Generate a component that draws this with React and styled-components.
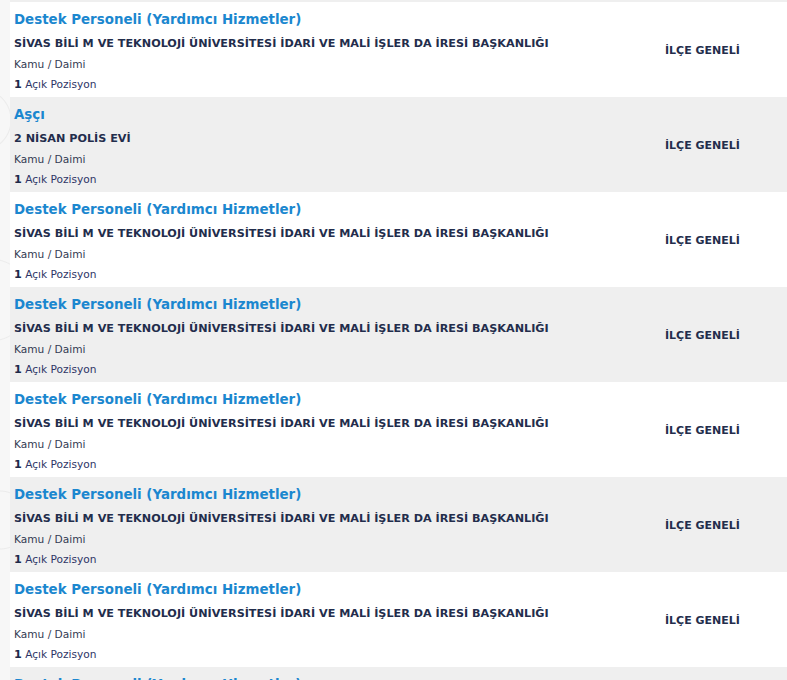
import React from "react";
import styled, { createGlobalStyle } from "styled-components";

const Global = createGlobalStyle`
  html, body { margin: 0; padding: 0; }
  body {
    background: #f6f6f6;
    font-family: "DejaVu Sans", Verdana, sans-serif;
    overflow: hidden;
  }
`;

const Page = styled.div`
  padding-left: 10px;
  min-height: 680px;
  background:
    radial-gradient(circle at -20px 120px, transparent 30px, #ebebeb 31px, transparent 32px),
    radial-gradient(circle at -10px 300px, transparent 40px, #ececec 41px, transparent 42px),
    radial-gradient(circle at 0px 520px, transparent 28px, #ebebeb 29px, transparent 30px),
    #f7f7f7;
  background-repeat: no-repeat;
`;

const List = styled.div`
  border-top: 2px solid #efefef;
  background: #fff;
`;

const Row = styled.div`
  display: grid;
  grid-template-columns: 1fr 122px;
  align-items: center;
  height: 95px;
  box-sizing: border-box;
  padding: 0 0 0 4px;
  background: ${(p) => (p.$alt ? "#efefef" : "#ffffff")};
`;

const Info = styled.div`
  display: flex;
  flex-direction: column;
  align-self: start;
  padding-top: 9px;
`;

const Title = styled.a`
  color: #1b87cf;
  font-weight: bold;
  font-size: 13.4px;
  line-height: 18px;
  text-decoration: none;
  margin-bottom: 7px;
`;

const Org = styled.div`
  color: #232d4c;
  font-weight: bold;
  font-size: 11.2px;
  line-height: 16px;
  margin-bottom: 4px;
`;

const Meta = styled.div`
  color: #333a52;
  font-size: 10.6px;
  line-height: 16px;
  margin-bottom: 4px;
`;

const Positions = styled.div`
  color: #2e3566;
  font-size: 10.6px;
  line-height: 16px;
  b { color: #1e2a4a; font-size: 11.2px; }
`;

const Area = styled.div`
  color: #232d4c;
  font-weight: bold;
  font-size: 11px;
  padding-top: 1px;
`;

const rows = [
  { title: "Destek Personeli (Yardımcı Hizmetler)", org: "SİVAS BİLİ M VE TEKNOLOJİ ÜNİVERSİTESİ İDARİ VE MALİ İŞLER DA İRESİ BAŞKANLIĞI" },
  { title: "Aşçı", org: "2 NİSAN POLİS EVİ" },
  { title: "Destek Personeli (Yardımcı Hizmetler)", org: "SİVAS BİLİ M VE TEKNOLOJİ ÜNİVERSİTESİ İDARİ VE MALİ İŞLER DA İRESİ BAŞKANLIĞI" },
  { title: "Destek Personeli (Yardımcı Hizmetler)", org: "SİVAS BİLİ M VE TEKNOLOJİ ÜNİVERSİTESİ İDARİ VE MALİ İŞLER DA İRESİ BAŞKANLIĞI" },
  { title: "Destek Personeli (Yardımcı Hizmetler)", org: "SİVAS BİLİ M VE TEKNOLOJİ ÜNİVERSİTESİ İDARİ VE MALİ İŞLER DA İRESİ BAŞKANLIĞI" },
  { title: "Destek Personeli (Yardımcı Hizmetler)", org: "SİVAS BİLİ M VE TEKNOLOJİ ÜNİVERSİTESİ İDARİ VE MALİ İŞLER DA İRESİ BAŞKANLIĞI" },
  { title: "Destek Personeli (Yardımcı Hizmetler)", org: "SİVAS BİLİ M VE TEKNOLOJİ ÜNİVERSİTESİ İDARİ VE MALİ İŞLER DA İRESİ BAŞKANLIĞI" },
  { title: "Destek Personeli (Yardımcı Hizmetler)", org: "SİVAS BİLİ M VE TEKNOLOJİ ÜNİVERSİTESİ İDARİ VE MALİ İŞLER DA İRESİ BAŞKANLIĞI" },
];

export default function App() {
  return (
    <>
      <Global />
      <Page>
        <List>
          {rows.map((r, i) => (
            <Row key={i} $alt={i % 2 === 1}>
              <Info>
                <Title href="#">{r.title}</Title>
                <Org>{r.org}</Org>
                <Meta>Kamu / Daimi</Meta>
                <Positions><b>1</b> Açık Pozisyon</Positions>
              </Info>
              <Area>İLÇE GENELİ</Area>
            </Row>
          ))}
        </List>
      </Page>
    </>
  );
}
